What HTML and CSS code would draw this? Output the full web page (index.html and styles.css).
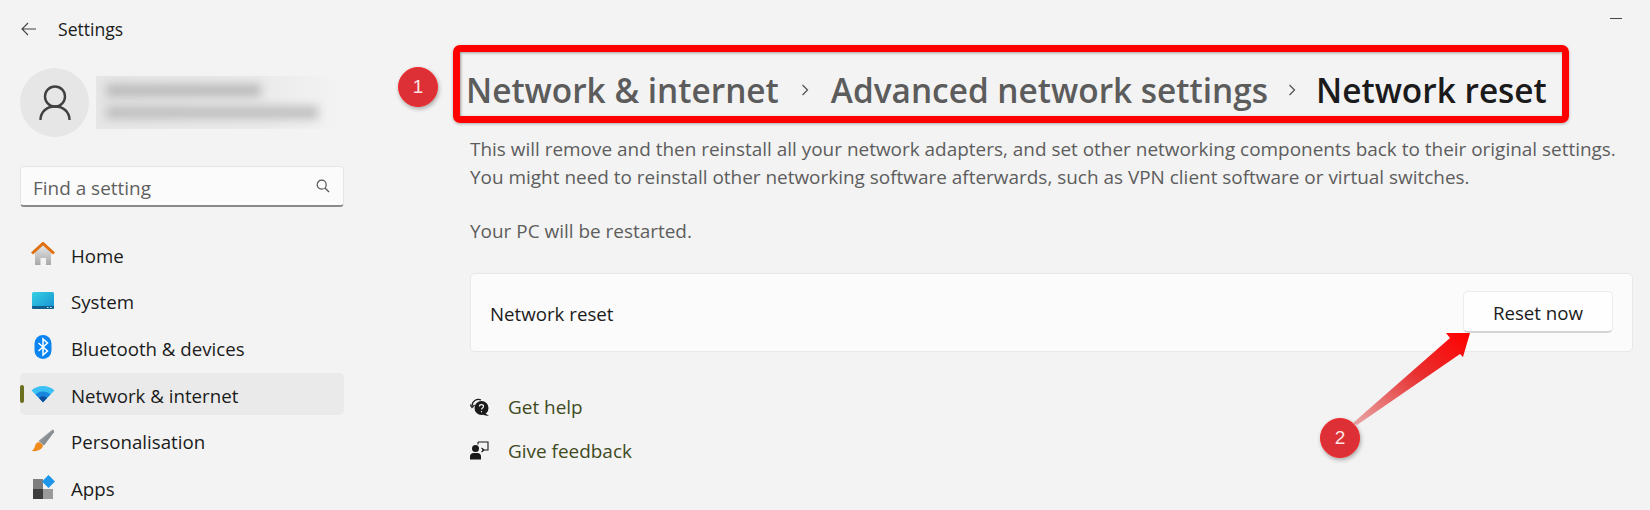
FILE: index.html
```html
<!DOCTYPE html>
<html lang="en">
<head>
  <meta charset="UTF-8">
  <title>Settings</title>
  <link rel="stylesheet" href="styles.css">
</head>
<body>
  <div class="sidebar">
    <div class="titlebar">
      <svg class="back-icon" width="16" height="14" viewBox="0 0 16 14"><path d="M7 1 1 7l6 6M1 7h14" fill="none" stroke="#444" stroke-width="1.1"/></svg>
      <span>Settings</span>
    </div>

    <div class="profile">
      <div class="avatar">
        <svg width="32" height="36" viewBox="0 0 32 36"><circle cx="16" cy="11.5" r="10" fill="none" stroke="#404040" stroke-width="2.4"/><path d="M1.5 35c0-8 6-13.500 14.500-13.500S30.500 27 30.500 35" fill="none" stroke="#404040" stroke-width="2.4"/></svg>
      </div>
      <div class="profile-blur">
        <div class="blur-name"></div>
        <div class="blur-mail"></div>
      </div>
    </div>

    <div class="search">
      <span class="search-text">Find a setting</span>
      <svg width="14" height="14" viewBox="0 0 14 14"><circle cx="5.700" cy="5.700" r="4.500" fill="none" stroke="#555" stroke-width="1.200"/><path d="m9 9 4 4" stroke="#555" stroke-width="1.300"/></svg>
    </div>

    <div class="nav">
      <div class="nav-item">
        <svg width="24" height="24" viewBox="0 0 24 24">
          <defs><linearGradient id="wall" x1="0" y1="0" x2="0" y2="1"><stop offset="0" stop-color="#e6e6e6"/><stop offset="1" stop-color="#a8a8a8"/></linearGradient></defs>
          <path d="M4 10 12 3l8 7v13h-5v-7H9.500v7H4z" fill="url(#wall)"/>
          <path d="M1 11.500 12 1.500l11 10" fill="none" stroke="#e0700f" stroke-width="3"/>
        </svg>
        <span>Home</span>
      </div>
      <div class="nav-item">
        <svg width="24" height="24" viewBox="0 0 24 24">
          <defs><linearGradient id="screen" x1="0" y1="0" x2="1" y2="1"><stop offset="0" stop-color="#35d0e4"/><stop offset="1" stop-color="#1590d0"/></linearGradient></defs>
          <rect x="1" y="3" width="22" height="17" rx="1.500" fill="url(#screen)"/>
          <path d="M1 17h22v1.500a1.500 1.500 0 0 1-1.500 1.500h-19A1.500 1.500 0 0 1 1 18.500z" fill="#0f5f8f"/>
          <path d="M16 18.500h1.500M19 18.500h1.500" stroke="#cfe8f2" stroke-width="1"/>
        </svg>
        <span>System</span>
      </div>
      <div class="nav-item">
        <svg width="24" height="24" viewBox="0 0 24 24">
          <rect x="3.500" y="0" width="17" height="24" rx="8.500" fill="#0a84f0"/>
          <path d="m7.500 8 9 8-4.500 4V4l4.500 4-9 8" fill="none" stroke="#fff" stroke-width="1.500"/>
        </svg>
        <span>Bluetooth &amp; devices</span>
      </div>
      <div class="nav-item nav-item-active">
        <svg width="24" height="24" viewBox="0 0 24 24">
          <path d="M0.500 8.500C3.500 5.500 7.500 4 12 4s8.500 1.500 11.500 4.500L12 20z" fill="#3cc1f5"/>
          <path d="M4.500 12.500C6.500 10.500 9 9.500 12 9.500s5.500 1 7.500 3L12 20z" fill="#1a86dc"/>
          <path d="M8 16c1-1 2.500-1.700 4-1.700s3 .7 4 1.700l-4 4.500z" fill="#0d4f9e"/>
        </svg>
        <span>Network &amp; internet</span>
      </div>
      <div class="nav-item">
        <svg width="24" height="24" viewBox="0 0 24 24">
          <defs><linearGradient id="handle" x1="0" y1="0" x2="1" y2="1"><stop offset="0" stop-color="#a8adb2"/><stop offset="1" stop-color="#6f7479"/></linearGradient></defs>
          <path d="M21 1c1.500-.5 2.500.5 2 2.200L13 16.500 7.500 12z" fill="url(#handle)"/>
          <path d="M8 13c-2.500.5-3.500 2-4 4-.4 2-1.500 3.500-3 5 4 .5 8-.5 10-3 1-1.300 1.200-2.700.5-3.500z" fill="#f08a1c"/>
        </svg>
        <span>Personalisation</span>
      </div>
      <div class="nav-item">
        <svg width="24" height="24" viewBox="0 0 24 24">
          <rect x="2" y="4" width="10" height="10" fill="#7d7d7d"/>
          <rect x="2" y="14" width="10" height="10" fill="#3d3d3d"/>
          <rect x="12" y="14" width="10" height="10" fill="#9a9a9a"/>
          <path d="m17.500 0 6.500 6.500-6.500 6.500L11 6.500z" fill="#1e96ea"/>
        </svg>
        <span>Apps</span>
      </div>
    </div>
  </div>

  <div class="main">
    <div class="window-controls"><span class="minimize"></span></div>

    <div class="breadcrumb">
      <span class="crumb">Network &amp; internet</span>
      <svg class="chevron" width="8" height="14" viewBox="0 0 8 14"><path d="m1.500 2 5 5-5 5" fill="none" stroke="#555" stroke-width="1.300"/></svg>
      <span class="crumb">Advanced network settings</span>
      <svg class="chevron chevron-last" width="8" height="14" viewBox="0 0 8 14"><path d="m1.500 2 5 5-5 5" fill="none" stroke="#555" stroke-width="1.300"/></svg>
      <span class="crumb crumb-current">Network reset</span>
    </div>

    <p class="desc">This will remove and then reinstall all your network adapters, and set other networking components back to their original settings.<br>You might need to reinstall other networking software afterwards, such as VPN client software or virtual switches.</p>
    <p class="desc desc-gap">Your PC will be restarted.</p>

    <div class="card">
      <span class="card-label">Network reset</span>
      <div class="btn">Reset now</div>
    </div>

    <div class="links">
      <div class="link">
        <svg width="20" height="20" viewBox="0 0 20 20">
          <path d="M2 9a6.500 6.500 0 0 1 9-6" fill="none" stroke="#1a1a1a" stroke-width="1.200"/>
          <path d="M0 7.500 2 10.500 4.500 8" fill="none" stroke="#1a1a1a" stroke-width="1.200"/>
          <circle cx="11.500" cy="11" r="7" fill="#1a1a1a"/>
          <path d="m15 16 4 3-6-1z" fill="#1a1a1a"/>
          <path d="M9.500 9.500c0-2.500 4-2.500 4 0 0 1.500-2 1.500-2 3M11.500 14v1.200" fill="none" stroke="#fff" stroke-width="1.100"/>
        </svg>
        <span>Get help</span>
      </div>
      <div class="link">
        <svg width="20" height="20" viewBox="0 0 20 20">
          <circle cx="5.500" cy="7.500" r="3.500" fill="#1a1a1a"/>
          <path d="M0 18.500v-3c0-2 1.500-3.500 3.500-3.500h4c2 0 3.500 1.500 3.500 3.500v3z" fill="#1a1a1a"/>
          <path d="M8 1h10v8h-6" fill="none" stroke="#1a1a1a" stroke-width="1.100"/>
          <path d="M8 1v2.500M14 9l-2.500-2M14 9l-2.500 2" fill="none" stroke="#1a1a1a" stroke-width="1.100"/>
        </svg>
        <span>Give feedback</span>
      </div>
    </div>
  </div>

  <!-- annotations on top of the screenshot -->
  <div class="red-box"></div>
  <div class="badge badge-one">1</div>
  <svg class="arrow" width="140" height="120" viewBox="0 0 140 120">
    <defs><linearGradient id="arrowFill" x1="0" y1="1" x2="1" y2="0"><stop offset="0" stop-color="#e8a8a8"/><stop offset="0.550" stop-color="#e83030"/><stop offset="1" stop-color="#ff0000"/></linearGradient></defs>
    <path d="M13 90 110 5 106 0 130 0 123 24 120 21 17 92z" fill="url(#arrowFill)"/>
  </svg>
  <div class="badge badge-two">2</div>
</body>
</html>
```

FILE: styles.css
```css
body {
  margin: 0;
  width: 1650px;
  height: 510px;
  overflow: hidden;
  position: relative;
  display: flex;
  background: #f3f3f3;
  color: #1b1b1b;
  font-family: "Open Sans", "Noto Sans", sans-serif;
  font-size: 18.950px;
}
.sidebar {
  width: 324px;
  padding-left: 20px;
  flex-shrink: 0;
}
.titlebar {
  height: 56px;
  padding-top: 1px;
  box-sizing: border-box;
  display: flex;
  align-items: center;
  font-size: 17.600px;
}
.back-icon {
  margin-left: 1px;
  margin-right: 21px;
}
.profile {
  margin-top: 12px;
  height: 69px;
  display: flex;
  align-items: center;
}
.avatar {
  width: 69px;
  height: 69px;
  border-radius: 50%;
  background: #e6e6e6;
  display: flex;
  align-items: center;
  justify-content: center;
}
.profile-blur {
  width: 243px;
  height: 53px;
  margin-left: 7px;
  padding: 8px 0 0 10px;
  box-sizing: border-box;
  background: linear-gradient(to right, #e6e6e6, #ebebeb 70%, #f3f3f3);
}
.blur-name {
  width: 155px;
  height: 13px;
  background: #bcbcbc;
  filter: blur(5px);
}
.blur-mail {
  width: 212px;
  height: 13px;
  margin-top: 9px;
  background: #c0c0c0;
  filter: blur(5px);
}
.search {
  margin-top: 29px;
  height: 41px;
  box-sizing: border-box;
  padding: 0 13px 0 12px;
  display: flex;
  align-items: center;
  justify-content: space-between;
  background: #fbfbfb;
  border: 1px solid #e6e6e6;
  border-bottom: 2px solid #8a8a8a;
  border-radius: 4px;
  color: #5f5f5f;
}
.search-text {
  padding-top: 3px;
}
.nav {
  margin-top: 26px;
  display: flex;
  flex-direction: column;
  gap: 4.700px;
  font-size: 18.700px;
}
.nav-item {
  height: 42px;
  flex-shrink: 0;
  padding-left: 11px;
  display: flex;
  align-items: center;
  gap: 16px;
  border-radius: 5px;
}
.nav-item span {
  padding-top: 2px;
}
.nav-item-active {
  position: relative;
  background: #eaeaea;
}
.nav-item-active::before {
  content: "";
  position: absolute;
  left: 0;
  top: 12px;
  width: 3.500px;
  height: 18px;
  border-radius: 2px;
  background: #6b7021;
}
.main {
  flex: 1;
  min-width: 0;
  margin-left: 126px;
  padding-right: 17px;
}
.window-controls {
  height: 65px;
  display: flex;
  justify-content: flex-end;
  align-items: flex-start;
}
.minimize {
  width: 12px;
  height: 1px;
  margin-top: 18px;
  margin-right: 11px;
  background: #444;
}
.breadcrumb {
  height: 50px;
  margin-left: -4px;
  display: flex;
  align-items: center;
  font-size: 33.400px;
  font-weight: 600;
  white-space: nowrap;
}
.crumb {
  color: #5c5c5c;
}
.crumb-current {
  color: #1b1b1b;
}
.chevron {
  margin: 0 22px;
}
.chevron-last {
  margin: 0 20px;
}
.desc {
  margin: 21px 0 0;
  line-height: 27.500px;
  color: #5d5d5d;
  white-space: nowrap;
}
.desc-gap {
  margin-top: 27px;
}
.card {
  margin-top: 27px;
  height: 79px;
  box-sizing: border-box;
  padding: 0 19px;
  display: flex;
  align-items: center;
  justify-content: space-between;
  background: #fbfbfb;
  border: 1px solid #e8e8e8;
  border-radius: 5px;
  font-size: 18.700px;
}
.card-label {
  padding-top: 3px;
}
.btn {
  width: 150px;
  height: 42px;
  box-sizing: border-box;
  padding-top: 2px;
  display: flex;
  align-items: center;
  justify-content: center;
  background: #fefefe;
  border: 1px solid #ececec;
  border-bottom: 2px solid #d4d4d4;
  border-radius: 5px;
}
.links {
  margin-top: 33.500px;
}
.link {
  height: 44px;
  display: flex;
  align-items: center;
  gap: 18px;
  color: #3f4a1e;
}
.red-box {
  position: absolute;
  left: 453px;
  top: 45px;
  width: 1116px;
  height: 78px;
  box-sizing: border-box;
  border: 7px solid #ff0000;
  border-radius: 7px;
  box-shadow: 0 1px 3px rgba(0, 0, 0, 0.3), inset 1px 1px 3px rgba(0, 0, 0, 0.35);
}
.badge {
  position: absolute;
  width: 40px;
  height: 40px;
  box-sizing: border-box;
  border: 1px solid #f52a2a;
  border-radius: 50%;
  background: #dc3036;
  box-shadow: 1px 2px 4px rgba(0, 0, 0, 0.3);
  color: #fbe4e4;
  font-family: "Liberation Sans", sans-serif;
  font-size: 19px;
  display: flex;
  align-items: center;
  justify-content: center;
}
.badge-one {
  left: 398px;
  top: 67px;
}
.badge-two {
  left: 1320px;
  top: 418px;
}
.arrow {
  position: absolute;
  left: 1340px;
  top: 333px;
}
```
